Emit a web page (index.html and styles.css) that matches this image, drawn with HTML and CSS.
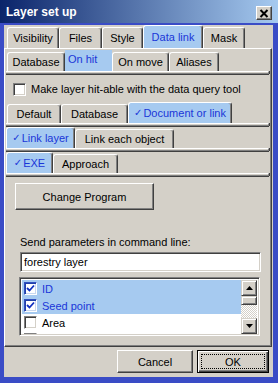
FILE: index.html
```html
<!DOCTYPE html>
<html>
<head>
<meta charset="utf-8">
<link rel="stylesheet" href="styles.css">
</head>
<body>
<div class="window">
  <div class="titlebar">
    <span class="title">Layer set up</span>
    <span class="close"><svg width="10" height="9" viewBox="0 0 10 9"><path d="M1.5 1 L8.5 8 M8.5 1 L1.5 8" stroke="#000" stroke-width="2"/></svg></span>
  </div>
  <div class="frame">
    <div class="tabs row1">
      <div class="tab w-vis">Visibility</div>
      <div class="tab w-files">Files</div>
      <div class="tab w-style">Style</div>
      <div class="tab sel w-dl">Data link</div>
      <div class="tab w-mask">Mask</div>
    </div>
    <div class="panel">
      <div class="tabs row2">
        <div class="tab w-db">Database</div>
        <div class="tab sel flat w-hit">On hit</div>
        <div class="tab w-move">On move</div>
        <div class="tab w-alias">Aliases</div>
      </div>
      <div class="strip"></div>
      <div class="chk-row"><span class="cb"></span><span>Make layer hit-able with the data query tool</span></div>
      <div class="tabs row3">
        <div class="tab w-def">Default</div>
        <div class="tab w-db2">Database</div>
        <div class="tab sel w-doc"><span class="tick">✓</span>Document or link</div>
      </div>
      <div class="strip"></div>
      <div class="tabs row4">
        <div class="tab sel w-ll"><span class="tick">✓</span>Link layer</div>
        <div class="tab w-leo">Link each object</div>
      </div>
      <div class="strip"></div>
      <div class="tabs row5">
        <div class="tab sel w-exe"><span class="tick">✓</span>EXE</div>
        <div class="tab w-app">Approach</div>
      </div>
      <div class="strip"></div>
      <div class="btn change">Change Program</div>
      <div class="label">Send parameters in command line:</div>
      <div class="input">forestry layer</div>
      <div class="listbox">
        <div class="items">
          <div class="item on"><span class="cb"><svg width="9" height="9" viewBox="0 0 9 9"><path d="M1 4 L3.5 6.5 L8 1.5" fill="none" stroke="#1030c0" stroke-width="1.8"/></svg></span>ID</div>
          <div class="item on"><span class="cb"><svg width="9" height="9" viewBox="0 0 9 9"><path d="M1 4 L3.5 6.5 L8 1.5" fill="none" stroke="#1030c0" stroke-width="1.8"/></svg></span>Seed point</div>
          <div class="item"><span class="cb"></span>Area</div>
          <div class="item"><span class="cb"></span>Length</div>
        </div>
        <div class="scrollbar">
          <div class="sbtn"><svg width="7" height="4" viewBox="0 0 7 4"><path d="M0 4 L3.5 0 L7 4 Z" fill="#000"/></svg></div>
          <div class="thumb"></div>
          <div class="track"></div>
          <div class="sbtn"><svg width="7" height="4" viewBox="0 0 7 4"><path d="M0 0 L3.5 4 L7 0 Z" fill="#000"/></svg></div>
        </div>
      </div>
    </div>
    <div class="buttons">
      <div class="btn cancel">Cancel</div>
      <div class="btn ok"><span class="focus">OK</span></div>
    </div>
  </div>
</div>
</body>
</html>
```
FILE: styles.css
```css
html, body {
  margin: 0;
  padding: 0;
  background: #d4d0c8;
}
body {
  font-family: "Liberation Sans", Arial, "DejaVu Sans", sans-serif;
  font-size: 11px;
  color: #000;
}
.window {
  width: 278px;
  height: 383px;
  display: flex;
  flex-direction: column;
  overflow: hidden;
}
.titlebar {
  height: 23px;
  flex: none;
  box-sizing: border-box;
  background: linear-gradient(to right, #0a246a, #a6caf0);
  display: flex;
  align-items: flex-end;
  justify-content: space-between;
  padding: 0 6px 3px 6px;
}
.title {
  color: #fff;
  font-weight: bold;
  font-size: 12px;
  line-height: 15px;
}
.close {
  width: 14px;
  height: 12px;
  background: #d4d0c8;
  border: 1px solid;
  border-color: #fff #404040 #404040 #fff;
  box-shadow: inset -1px -1px #808080;
  display: flex;
  align-items: center;
  justify-content: center;
}
.frame {
  flex: 1;
  background: #d4d0c8;
  border-style: solid;
  border-color: #3a4cc6;
  border-width: 2px 5px 6px 4px;
  display: flex;
  flex-direction: column;
  padding-right: 1px;
}
.tabs {
  display: flex;
  align-items: flex-end;
  flex: none;
}
.row1 {
  padding-left: 3px;
  height: 23px;
}
.tab {
  box-sizing: border-box;
  height: 19px;
  border-top: 1px solid #fff;
  border-left: 1px solid #fff;
  border-right: 1px solid #404040;
  box-shadow: inset -1px 0 #808080;
  border-radius: 3px 3px 0 0;
  display: flex;
  align-items: center;
  justify-content: center;
  white-space: nowrap;
  padding-bottom: 1px;
}
.row1 .tab { height: 21px; }
.row1 .tab.sel { height: 23px; }
.tab.sel {
  height: 21px;
  background: #a6caf0;
  color: #1a36d8;
}
.tab.flat {
  border: none;
  box-shadow: none;
  border-radius: 0;
  align-items: flex-start;
  padding-top: 3px;
  justify-content: flex-start;
  padding-left: 3px;
}
.tick {
  font-family: "DejaVu Sans", sans-serif;
  font-size: 10px;
  margin-right: 1px;
}
.w-vis { width: 52px; }
.w-files { width: 43px; }
.w-style { width: 41px; }
.w-dl { width: 60px; }
.w-mask { width: 42px; }
.w-db { width: 58px; }
.w-hit { width: 47px; }
.w-move { width: 57px; }
.w-alias { width: 50px; }
.w-def { width: 54px; }
.w-db2 { width: 67px; }
.w-doc { width: 104px; }
.w-ll { width: 69px; }
.w-leo { width: 99px; }
.w-exe { width: 47px; }
.w-app { width: 65px; }

.panel {
  height: 299px;
  box-sizing: border-box;
  border-top: 1px solid #fff;
  border-left: 1px solid #fff;
  border-right: 1px solid #404040;
  border-bottom: 1px solid #404040;
  box-shadow: inset -1px -1px #808080;
  padding: 1px 1px 0 2px;
  display: flex;
  flex-direction: column;
  flex: none;
}
.row2 { height: 21px; }
.strip {
  height: 1px;
  flex: none;
  border-top: 1px solid #fff;
  border-bottom: 1px solid #808080;
  border-right: 1px solid #808080;
  box-shadow: 0 1px #404040, 1px 0 #404040;
  margin-right: 1px;
  margin-left: -1px;
}
.chk-row {
  display: flex;
  align-items: center;
  gap: 5px;
  margin: 8px 0 0 6px;
  height: 14px;
}
.cb {
  box-sizing: border-box;
  width: 13px;
  height: 13px;
  flex: none;
  background: #fff;
  border: 1px solid;
  border-color: #808080 #fff #fff #808080;
  box-shadow: inset 1px 1px #404040, inset -1px -1px #d4d0c8;
  display: flex;
  align-items: center;
  justify-content: center;
}
.row3 { margin-top: 6px; height: 21px; }
.row4 { margin-top: 1px; height: 21px; margin-left: -1px; }
.row5 { margin-top: 1px; height: 21px; margin-left: -1px; }

.btn {
  box-sizing: border-box;
  background: #d4d0c8;
  border: 1px solid;
  border-color: #fff #404040 #404040 #fff;
  box-shadow: inset -1px -1px #808080;
  display: flex;
  align-items: center;
  justify-content: center;
}
.change {
  width: 139px;
  height: 27px;
  margin: 7px 0 0 8px;
  flex: none;
}
.label {
  margin: 26px 0 0 13px;
  line-height: 13px;
}
.input {
  box-sizing: border-box;
  width: 241px;
  height: 20px;
  margin: 3px 0 0 13px;
  background: #fff;
  border: 1px solid;
  border-color: #808080 #fff #fff #808080;
  box-shadow: inset 1px 1px #404040, inset -1px -1px #d4d0c8;
  padding: 0 3px;
  display: flex;
  align-items: center;
}
.listbox {
  box-sizing: border-box;
  width: 241px;
  height: 59px;
  margin: 5px 0 0 12px;
  background: #fff;
  border: 1px solid;
  border-color: #808080 #fff #fff #808080;
  box-shadow: inset 1px 1px #404040, inset -1px -1px #d4d0c8;
  padding: 2px 2px 1px 2px;
  display: flex;
  overflow: hidden;
}
.items {
  flex: 1;
  overflow: hidden;
}
.item {
  height: 17px;
  display: flex;
  align-items: center;
  gap: 5px;
  padding-left: 2px;
}
.item.on {
  background: #a6caf0;
  color: #1a36d8;
}
.item.on .cb {
  border-color: #3050c0 #fff #fff #3050c0;
  box-shadow: inset 1px 1px #2040a8, inset -1px -1px #c8d8f0;
}
.scrollbar {
  width: 16px;
  display: flex;
  flex-direction: column;
  flex: none;
}
.sbtn, .thumb {
  box-sizing: border-box;
  background: #d4d0c8;
  border: 1px solid;
  border-color: #d4d0c8 #404040 #404040 #d4d0c8;
  box-shadow: inset 1px 1px #fff, inset -1px -1px #808080;
  display: flex;
  align-items: center;
  justify-content: center;
  flex: none;
}
.sbtn { height: 16px; }
.thumb { height: 9px; }
.track {
  flex: 1;
  background-color: #d4d0c8;
  background-image: conic-gradient(#fff 25%, #d4d0c8 0 50%, #fff 0 75%, #d4d0c8 0);
  background-size: 2px 2px;
}
.buttons {
  display: flex;
  justify-content: flex-end;
  gap: 4px;
  margin-top: 3px;
  padding-right: 3px;
}
.cancel {
  width: 76px;
  height: 23px;
}
.ok {
  width: 72px;
  height: 23px;
  border: 1px solid #000;
  box-shadow: inset 1px 1px #fff, inset -1px -1px #404040, inset -2px -2px #808080;
  padding: 3px;
}
.focus {
  flex: 1;
  align-self: stretch;
  border: 1px dotted #000;
  display: flex;
  align-items: center;
  justify-content: center;
}
```
